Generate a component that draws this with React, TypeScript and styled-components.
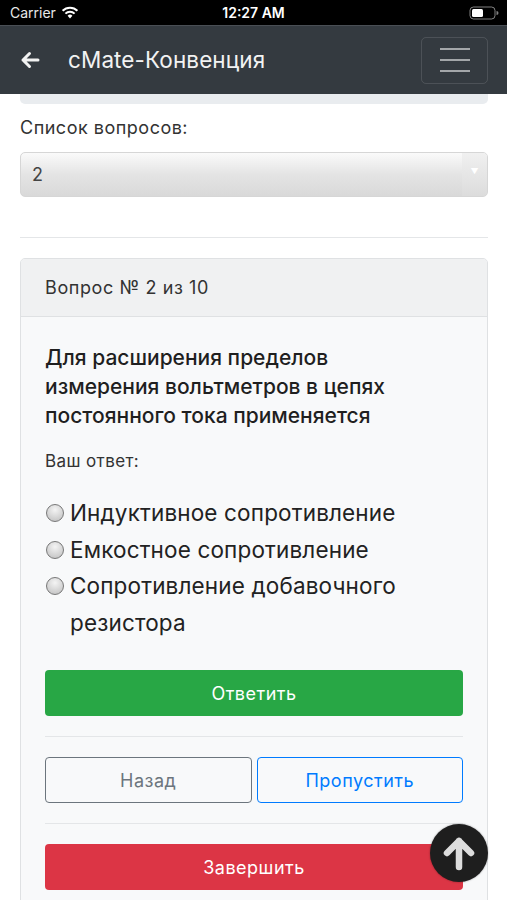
import React from "react";
import styled, { createGlobalStyle } from "styled-components";

const GlobalStyle = createGlobalStyle`
  html, body {
    margin: 0;
    padding: 0;
    background: #fff;
    font-family: Inter, "Liberation Sans", Arial, sans-serif;
    color: #212529;
  }
  * { box-sizing: border-box; }
`;

const answers = [
  "Индуктивное сопротивление",
  "Емкостное сопротивление",
  "Сопротивление добавочного резистора",
];

export default function App() {
  return (
    <Page>
      <GlobalStyle />
      <StatusBar>
        <Carrier>
          Carrier
          <svg width="18" height="13" viewBox="0 0 18 13">
            <path d="M9 12.5 L6.6 9.8 A3.4 3.4 0 0 1 11.4 9.8 Z" fill="#fff" />
            <path d="M4.4 7.6 A6.6 6.6 0 0 1 13.6 7.6" stroke="#fff" strokeWidth="2" fill="none" />
            <path d="M1.6 4.8 A10.4 10.4 0 0 1 16.4 4.8" stroke="#fff" strokeWidth="2" fill="none" />
          </svg>
        </Carrier>
        <Clock>12:27 AM</Clock>
        <Battery>
          <svg width="30" height="14" viewBox="0 0 30 14">
            <rect x="1" y="1" width="25" height="12" rx="3.5" stroke="#fff" strokeOpacity="0.5" fill="none" />
            <rect x="3" y="3" width="11" height="8" rx="1.5" fill="#fff" />
            <path d="M27.5 5 v4 a2 2 0 0 0 0 -4z" fill="#fff" fillOpacity="0.5" />
          </svg>
        </Battery>
      </StatusBar>

      <NavBar>
        <BackArrow>
          <svg width="20" height="18" viewBox="0 0 20 18">
            <path d="M18 9 H3 M9.5 2.5 L3 9 L9.5 15.5" stroke="#f2f2f2" strokeWidth="3" fill="none" strokeLinecap="round" strokeLinejoin="round" />
          </svg>
        </BackArrow>
        <Brand>cMate-Конвенция</Brand>
        <Toggler>
          <TogglerLine />
          <TogglerLine />
          <TogglerLine />
        </Toggler>
      </NavBar>

      <Content>
        <TopStub />
        <Label>Список вопросов:</Label>
        <Select>
          <SelectValue>2</SelectValue>
          <SelectCaret>▼</SelectCaret>
        </Select>
        <Divider $top={40} $bottom={20} />

        <Card>
          <CardHeader>Вопрос № 2 из 10</CardHeader>
          <CardBody>
            <Question>
              Для расширения пределов измерения вольтметров в цепях постоянного тока применяется
            </Question>
            <AnswerLabel>Ваш ответ:</AnswerLabel>
            <Options>
              {answers.map((a) => (
                <Option key={a}>
                  <Radio />
                  <OptionText>{a}</OptionText>
                </Option>
              ))}
            </Options>
            <SolidButton $bg="#28a745">Ответить</SolidButton>
            <Divider $top={20} $bottom={20} />
            <ButtonRow>
              <OutlineButton $color="#6c757d">Назад</OutlineButton>
              <OutlineButton $color="#007bff">Пропустить</OutlineButton>
            </ButtonRow>
            <Divider $top={20} $bottom={20} />
            <SolidButton $bg="#dc3545">Завершить</SolidButton>
          </CardBody>
        </Card>
      </Content>

      <ScrollTop>
        <svg width="40" height="40" viewBox="0 0 40 40">
          <path d="M20 34 V8 M8 20 L20 8 L32 20" stroke="#ddd" strokeWidth="6.5" fill="none" strokeLinecap="round" strokeLinejoin="round" />
        </svg>
      </ScrollTop>
    </Page>
  );
}

const Page = styled.div`
  position: relative;
  width: 507px;
  height: 900px;
  overflow: hidden;
  background: #fff;
`;

const StatusBar = styled.div`
  height: 25px;
  background: #000;
  color: #fff;
  display: flex;
  align-items: center;
  justify-content: space-between;
  padding: 0 8px 0 10px;
  font-size: 14px;
  position: relative;
`;

const Carrier = styled.div`
  display: flex;
  align-items: center;
  gap: 5px;
  color: #e8e8e8;
`;

const Clock = styled.div`
  position: absolute;
  left: 0;
  right: 0;
  text-align: center;
  font-weight: 600;
  font-size: 14px;
  pointer-events: none;
`;

const Battery = styled.div`
  display: flex;
  align-items: center;
`;

const NavBar = styled.div`
  height: 69px;
  background: #343a40;
  display: flex;
  align-items: center;
  padding: 0 20px;
  border-top: 1px solid #4a4f55;
`;

const BackArrow = styled.div`
  display: flex;
  align-items: center;
  width: 48px;
`;

const Brand = styled.div`
  flex: 1;
  color: #f2f2f2;
  font-size: 22.5px;
  letter-spacing: 0.1px;
  padding-bottom: 2px;
`;

const Toggler = styled.div`
  width: 67px;
  height: 47px;
  border: 1px solid rgba(255, 255, 255, 0.12);
  border-radius: 5px;
  display: flex;
  flex-direction: column;
  align-items: center;
  justify-content: center;
  gap: 9px;
  margin-right: -1px;
`;

const TogglerLine = styled.span`
  display: block;
  width: 30px;
  height: 2px;
  background: rgba(255, 255, 255, 0.55);
`;

const Content = styled.div`
  padding: 0 19px 0 20px;
`;

const TopStub = styled.div`
  height: 10px;
  background: #e9ecef;
  border-radius: 0 0 5px 5px;
`;

const Label = styled.div`
  margin-top: 12px;
  font-size: 18px;
  letter-spacing: 0.5px;
  line-height: 24px;
  color: #333;
`;

const Select = styled.div`
  margin-top: 12px;
  height: 45px;
  border: 1px solid #d6d6d6;
  border-radius: 5px;
  background: linear-gradient(#fafafa, #e4e4e4 50%, #d9d9d9);
  display: flex;
  align-items: center;
  overflow: hidden;
`;

const SelectValue = styled.div`
  flex: 1;
  padding-left: 11px;
  font-size: 18px;
  color: #444;
`;

const SelectCaret = styled.div`
  width: 25px;
  height: 100%;
  display: flex;
  align-items: center;
  justify-content: center;
  font-size: 8px;
  color: #fff;
  background: linear-gradient(#f0f0f0, #dcdcdc);
  padding-bottom: 8px;
`;

const Divider = styled.hr<{ $top: number; $bottom: number }>`
  border: 0;
  border-top: 1px solid #e4e6e8;
  margin: ${(p) => p.$top}px 0 ${(p) => p.$bottom}px;
`;

const Card = styled.div`
  border: 1px solid #dfe1e3;
  border-radius: 5px;
  background: #f8f9fa;
  overflow: hidden;
`;

const CardHeader = styled.div`
  height: 58px;
  background: #f0f1f2;
  border-bottom: 1px solid #dfe1e3;
  display: flex;
  align-items: center;
  padding: 0 24px;
  font-size: 18px;
  letter-spacing: 0.6px;
  color: #333;
`;

const CardBody = styled.div`
  padding: 26px 24px 30px;
`;

const Question = styled.div`
  font-size: 21px;
  line-height: 29px;
  font-weight: 500;
  color: #1f1f1f;
  padding-right: 40px;
`;

const AnswerLabel = styled.div`
  margin-top: 20px;
  font-size: 17px;
  letter-spacing: 0.4px;
  line-height: 22px;
  color: #333;
`;

const Options = styled.div`
  margin-top: 23px;
  margin-bottom: 29px;
  display: flex;
  flex-direction: column;
`;

const Option = styled.div`
  display: flex;
  align-items: flex-start;
`;

const Radio = styled.span`
  flex: none;
  width: 18px;
  height: 18px;
  margin-top: 9px;
  margin-right: 6px;
  margin-left: 1px;
  border-radius: 50%;
  border: 1px solid #777;
  background: radial-gradient(circle at 50% 30%, #f4f4f4, #c8c8c8 80%);
`;

const OptionText = styled.span`
  font-size: 22.5px;
  letter-spacing: 0.15px;
  line-height: 36.5px;
  color: #222;
  padding-right: 40px;
`;

const SolidButton = styled.div<{ $bg: string }>`
  height: 46px;
  border-radius: 4px;
  background: ${(p) => p.$bg};
  color: #fff;
  font-size: 18px;
  letter-spacing: 0.5px;
  display: flex;
  align-items: center;
  justify-content: center;
`;

const ButtonRow = styled.div`
  display: grid;
  grid-template-columns: 1fr 1fr;
  gap: 5px;
`;

const OutlineButton = styled.div<{ $color: string }>`
  height: 46px;
  border: 1.5px solid ${(p) => p.$color};
  border-radius: 4px;
  color: ${(p) => p.$color};
  font-size: 18px;
  letter-spacing: 0.5px;
  display: flex;
  align-items: center;
  justify-content: center;
`;

const ScrollTop = styled.div`
  position: absolute;
  left: 430px;
  top: 824px;
  width: 58px;
  height: 58px;
  border-radius: 50%;
  background: #1e1e1e;
  display: flex;
  align-items: center;
  justify-content: center;
  box-shadow: 0 0 2px rgba(0, 0, 0, 0.4);
`;
